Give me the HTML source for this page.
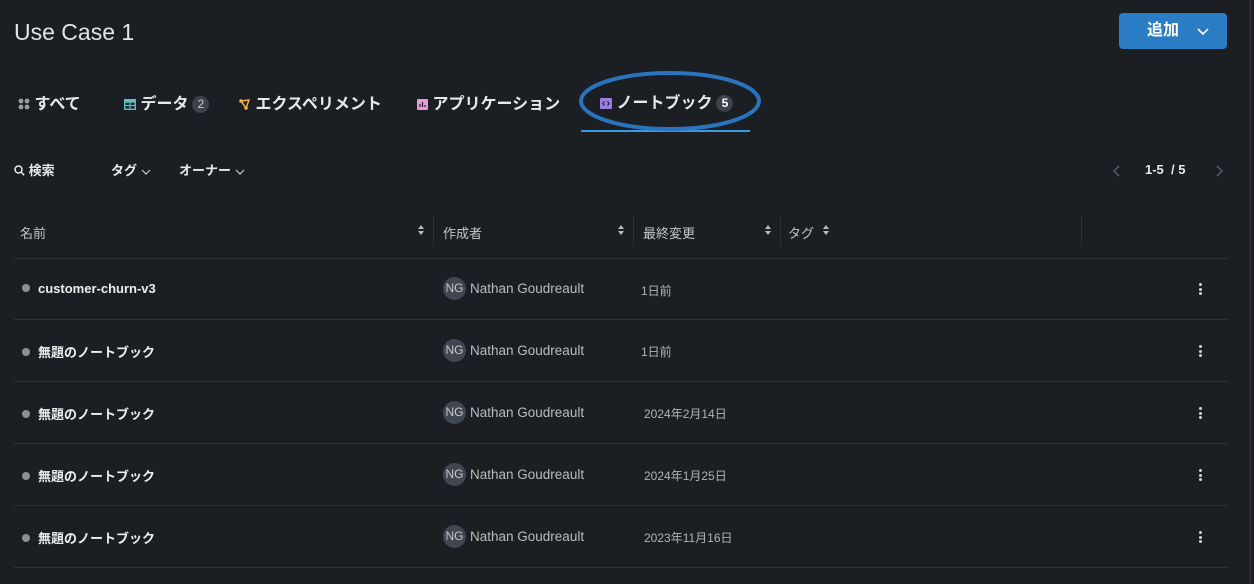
<!DOCTYPE html>
<html><head><meta charset="utf-8"><style>
*{margin:0;padding:0;box-sizing:border-box}
body{width:1254px;height:584px;background:#1b1e22;color:#e4e6e8;font-family:"Liberation Sans","Noto Sans CJK JP",sans-serif;position:relative;overflow:hidden}
.a{position:absolute;white-space:nowrap}
.title{left:14px;top:19px;font-size:23px;color:#e2e4e6}
.btn{left:1119px;top:13px;width:108px;height:36px;background:#2a7cc4;border-radius:4px;color:#fff;font-size:16px;font-weight:bold}
.tab{top:90px;font-size:16px;font-weight:bold;color:#e6e8ea}
.badge{display:inline-block;width:17px;height:17px;border-radius:50%;background:#3d4149;color:#c8cacd;font-size:12px;text-align:center;line-height:17px;font-weight:normal;vertical-align:1px;margin-left:4px}
.flt{top:160px;font-size:13px;font-weight:bold;color:#e6e8ea}
.hd{top:223px;font-size:13px;color:#c4c6c9}
.div{width:1px;height:30px;top:216px;background:#2e3237}
.line{left:14px;width:1214px;height:1px;background:#2e3237}
.nm{left:22px;font-size:13px;font-weight:bold;color:#eceef0}
.dot{display:inline-block;width:8px;height:8px;border-radius:50%;background:#8d9095;margin-right:8px;vertical-align:1px}
.au{left:443px;height:23px;display:flex;align-items:center;font-size:13.5px;color:#b9bcc0}
.av{width:23px;height:23px;border-radius:50%;background:#414650;color:#c5c8cc;font-size:12px;text-align:center;line-height:23px;margin-right:4px}
.dt{font-size:12px;color:#b0b3b7}
.kb{left:1199px;width:4px}
.kb i{display:block;width:3px;height:3px;background:#d0d2d5;border-radius:50%;margin-bottom:1.5px}
</style></head><body>
<div class="a title">Use Case 1</div>
<div class="a btn"><span class="a" style="left:28px;top:8px;line-height:20px">追加</span><svg class="a" style="left:78px;top:15px" width="12" height="8"><path d="M1 1l5 5 5-5" stroke="#fff" stroke-width="1.6" fill="none"/></svg></div>
<div class="a" style="left:1249px;top:0;width:2px;height:584px;background:#2a2d32"></div>

<svg width="0" height="0" style="position:absolute"><defs><g id="s"><path d="M0 4l3-4 3 4z M0 6l3 4 3-4z" fill="#b8babd"/></g></defs></svg>

<div class="a tab" style="left:18px"><svg width="12" height="12" style="vertical-align:-1px"><circle cx="3" cy="3" r="2.4" fill="#9a9da2"/><circle cx="9" cy="3" r="2.4" fill="#9a9da2"/><circle cx="3" cy="9" r="2.4" fill="#9a9da2"/><circle cx="9" cy="9" r="2.4" fill="#9a9da2"/></svg> すべて</div>
<div class="a tab" style="left:124px"><svg width="12" height="11" style="vertical-align:-1px"><rect x="0.7" y="0.7" width="10.6" height="9.6" fill="none" stroke="#5bc0c4" stroke-width="1.4"/><rect x="0.7" y="0.7" width="10.6" height="3" fill="#5bc0c4"/><path d="M6 3v7M1 6.5h10" stroke="#5bc0c4" stroke-width="1.2"/></svg> データ<span class="badge">2</span></div>
<div class="a tab" style="left:239px"><svg width="12" height="12" style="vertical-align:-1px"><path d="M2 3l8-1-3 8z" fill="none" stroke="#f0b43c" stroke-width="1.5"/><circle cx="2" cy="3" r="1.8" fill="#f0b43c"/><circle cx="7" cy="10" r="1.8" fill="#f0b43c"/></svg> エクスペリメント</div>
<div class="a tab" style="left:417px"><svg width="11" height="11" style="vertical-align:-1px"><rect width="11" height="11" rx="1" fill="#e59ad8"/><path d="M3 8V5M5.5 8V3M8 8V6" stroke="#2a1a28" stroke-width="1.2"/></svg> アプリケーション</div>
<div class="a tab" style="left:600px;top:89px"><svg width="12" height="11" style="vertical-align:-1px"><rect width="12" height="11" rx="1" fill="#9c7de0"/><path d="M4.5 3.5L2.8 5.5l1.7 2M7.5 3.5l1.7 2-1.7 2" stroke="#1d1530" stroke-width="1" fill="none"/></svg> ノートブック<span class="badge" style="color:#fff;font-weight:bold">5</span></div>
<div class="a" style="left:581px;top:130px;width:169px;height:2px;background:#3a9ae0"></div>
<svg class="a" style="left:578px;top:70px" width="186" height="62"><ellipse cx="92" cy="31" rx="89" ry="28" fill="none" stroke="#2a74bd" stroke-width="4"/></svg>

<div class="a flt" style="left:14px"><svg width="11" height="11" style="vertical-align:-1px"><circle cx="4.5" cy="4.5" r="3.5" stroke="#e6e8ea" stroke-width="1.5" fill="none"/><path d="M7 7l3.2 3.2" stroke="#e6e8ea" stroke-width="1.5"/></svg> 検索</div>
<div class="a flt" style="left:111px">タグ <svg width="10" height="6"><path d="M1 1l4 4 4-4" stroke="#ccc" stroke-width="1.2" fill="none"/></svg></div>
<div class="a flt" style="left:179px">オーナー <svg width="10" height="6"><path d="M1 1l4 4 4-4" stroke="#ccc" stroke-width="1.2" fill="none"/></svg></div>
<svg class="a" style="left:1113px;top:165px" width="7" height="12"><path d="M6 1L1 6l5 5" stroke="#5a5e64" stroke-width="1.5" fill="none"/></svg>
<div class="a flt" style="left:1145px;top:162px">1-5 &nbsp;/ 5</div>
<svg class="a" style="left:1216px;top:165px" width="7" height="12"><path d="M1 1l5 5-5 5" stroke="#5a5e64" stroke-width="1.5" fill="none"/></svg>

<div class="a hd" style="left:20px">名前</div><svg class="a" style="left:418px;top:225px" width="6" height="10"><use href="#s"/></svg>
<div class="a div" style="left:433px"></div>
<div class="a hd" style="left:443px">作成者</div><svg class="a" style="left:618px;top:225px" width="6" height="10"><use href="#s"/></svg>
<div class="a div" style="left:633px"></div>
<div class="a hd" style="left:643px">最終変更</div><svg class="a" style="left:765px;top:225px" width="6" height="10"><use href="#s"/></svg>
<div class="a div" style="left:780px"></div>
<div class="a hd" style="left:788px">タグ</div><svg class="a" style="left:823px;top:225px" width="6" height="10"><use href="#s"/></svg>
<div class="a div" style="left:1081px"></div>

<div class="a line" style="top:258px"></div>
<div class="a line" style="top:319px"></div>
<div class="a line" style="top:381px"></div>
<div class="a line" style="top:443px"></div>
<div class="a line" style="top:505px"></div>
<div class="a line" style="top:567px"></div>

<div class="a nm" style="top:281px"><span class="dot"></span>customer-churn-v3</div>
<div class="a au" style="top:277px"><span class="av">NG</span>Nathan Goudreault</div>
<div class="a dt" style="left:641px;top:282px">1日前</div>
<div class="a kb" style="top:283px"><i></i><i></i><i></i></div>

<div class="a nm" style="top:342px"><span class="dot"></span>無題のノートブック</div>
<div class="a au" style="top:339px"><span class="av">NG</span>Nathan Goudreault</div>
<div class="a dt" style="left:641px;top:343px">1日前</div>
<div class="a kb" style="top:345px"><i></i><i></i><i></i></div>

<div class="a nm" style="top:404px"><span class="dot"></span>無題のノートブック</div>
<div class="a au" style="top:401px"><span class="av">NG</span>Nathan Goudreault</div>
<div class="a dt" style="left:644px;top:405px">2024年2月14日</div>
<div class="a kb" style="top:407px"><i></i><i></i><i></i></div>

<div class="a nm" style="top:466px"><span class="dot"></span>無題のノートブック</div>
<div class="a au" style="top:463px"><span class="av">NG</span>Nathan Goudreault</div>
<div class="a dt" style="left:644px;top:467px">2024年1月25日</div>
<div class="a kb" style="top:469px"><i></i><i></i><i></i></div>

<div class="a nm" style="top:528px"><span class="dot"></span>無題のノートブック</div>
<div class="a au" style="top:525px"><span class="av">NG</span>Nathan Goudreault</div>
<div class="a dt" style="left:644px;top:529px">2023年11月16日</div>
<div class="a kb" style="top:531px"><i></i><i></i><i></i></div>
</body></html>
